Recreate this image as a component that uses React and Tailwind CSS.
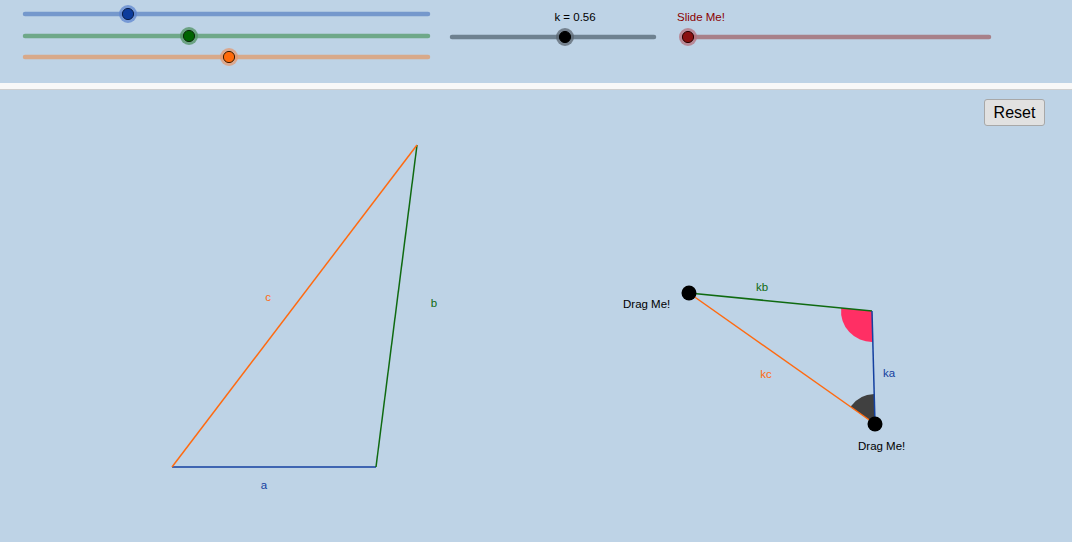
import React from "react";

const F = '"Liberation Sans", Arial, sans-serif';

function Slider({ x1, x2, y, knob, track, halo, fill, stroke = "#111" }) {
  return (
    <g>
      <line x1={x1} y1={y} x2={x2} y2={y} stroke={track} strokeWidth="4.5" strokeLinecap="round" />
      <circle cx={knob} cy={y} r="9" fill={halo} opacity="0.75" />
      <circle cx={knob} cy={y} r="5.6" fill={fill} stroke={stroke} strokeWidth="1" />
    </g>
  );
}

function sector(cx, cy, r, a1, a2) {
  let d = a2 - a1;
  while (d < 0) d += Math.PI * 2;
  if (d > Math.PI) {
    const t = a1;
    a1 = a2;
    a2 = t;
  }
  const p1 = [cx + r * Math.cos(a1), cy + r * Math.sin(a1)];
  const p2 = [cx + r * Math.cos(a2), cy + r * Math.sin(a2)];
  return `M${cx},${cy} L${p1[0]},${p1[1]} A${r},${r} 0 0 1 ${p2[0]},${p2[1]} Z`;
}

export default function App() {
  const P1 = [689, 203];
  const P2 = [872, 221];
  const P3 = [875, 334];
  const ang = (a, b) => Math.atan2(b[1] - a[1], b[0] - a[0]);
  const pink = sector(P2[0], P2[1], 31, ang(P2, P1), ang(P2, P3));
  const gray = sector(P3[0], P3[1], 30, ang(P3, P1), ang(P3, P2));

  return (
    <div className="w-[1072px] h-[542px] overflow-hidden bg-[#bed3e6] flex flex-col" style={{ fontFamily: F }}>
      <div className="h-[83px] shrink-0">
        <svg width="1072" height="83" className="block">
          <Slider x1={25} x2={428} y={14} knob={128} track="#7598cc" halo="#5d86cf" fill="#0c3c9c" stroke="#0a1f4a" />
          <Slider x1={25} x2={428} y={36} knob={189} track="#6fa889" halo="#4f9262" fill="#006400" stroke="#0a2a0a" />
          <Slider x1={25} x2={428} y={57} knob={229} track="#d8a98a" halo="#e39a72" fill="#ff6a0a" stroke="#3a1a00" />
          <Slider x1={452} x2={654} y={37} knob={565} track="#6e8190" halo="#5b6670" fill="#000" stroke="#000" />
          <Slider x1={689} x2={989} y={37} knob={688} track="#a88089" halo="#b5707c" fill="#8a1010" stroke="#2a0000" />
          <text x="575" y="21" textAnchor="middle" fontSize="11.5" fill="#000" fontFamily={F}>k = 0.56</text>
          <text x="677" y="21" fontSize="11.5" fill="#8b0000" fontFamily={F}>Slide Me!</text>
        </svg>
      </div>
      <div className="h-[6px] shrink-0 bg-[#f8f8f8]" />
      <div className="h-px shrink-0 bg-[#cfcfcf]" />
      <div className="relative flex-1 flex justify-end items-start pt-[9px] pr-[27px]">
        <svg width="1072" height="451" className="absolute left-0 top-0">
          <line x1="172" y1="377" x2="376" y2="377" stroke="#1440a0" strokeWidth="1.5" />
          <line x1="376" y1="377" x2="417" y2="55" stroke="#0f6a10" strokeWidth="1.5" />
          <line x1="172" y1="377" x2="417" y2="55" stroke="#ff6a10" strokeWidth="1.5" />
          <text x="268" y="211" textAnchor="middle" fontSize="11.5" fill="#ff6a10" fontFamily={F}>c</text>
          <text x="434" y="217" textAnchor="middle" fontSize="11.5" fill="#0f6a10" fontFamily={F}>b</text>
          <text x="264" y="399" textAnchor="middle" fontSize="11.5" fill="#1440a0" fontFamily={F}>a</text>

          <path d={pink} fill="#ff2f64" />
          <path d={gray} fill="#404040" />
          <line x1={P1[0]} y1={P1[1]} x2={P2[0]} y2={P2[1]} stroke="#0f6a10" strokeWidth="1.5" />
          <line x1={P2[0]} y1={P2[1]} x2={P3[0]} y2={P3[1]} stroke="#1440a0" strokeWidth="1.5" />
          <line x1={P1[0]} y1={P1[1]} x2={P3[0]} y2={P3[1]} stroke="#ff6a10" strokeWidth="1.5" />
          <circle cx={P1[0]} cy={P1[1]} r="7.5" fill="#000" />
          <circle cx={P3[0]} cy={P3[1]} r="7.5" fill="#000" />
          <text x="762" y="201" textAnchor="middle" fontSize="11.5" fill="#0f6a10" fontFamily={F}>kb</text>
          <text x="889" y="287" textAnchor="middle" fontSize="11.5" fill="#1440a0" fontFamily={F}>ka</text>
          <text x="766" y="288" textAnchor="middle" fontSize="11.5" fill="#ff6a10" fontFamily={F}>kc</text>
          <text x="623" y="218" fontSize="11.5" fill="#000" fontFamily={F}>Drag Me!</text>
          <text x="858" y="360" fontSize="11.5" fill="#000" fontFamily={F}>Drag Me!</text>
        </svg>
        <button className="relative w-[61px] h-[27px] rounded-[3px] border border-[#a8a8a8] bg-[#e1e1e1] text-[16px] text-black leading-none flex items-center justify-center" style={{ fontFamily: F }}>
          Reset
        </button>
      </div>
    </div>
  );
}
